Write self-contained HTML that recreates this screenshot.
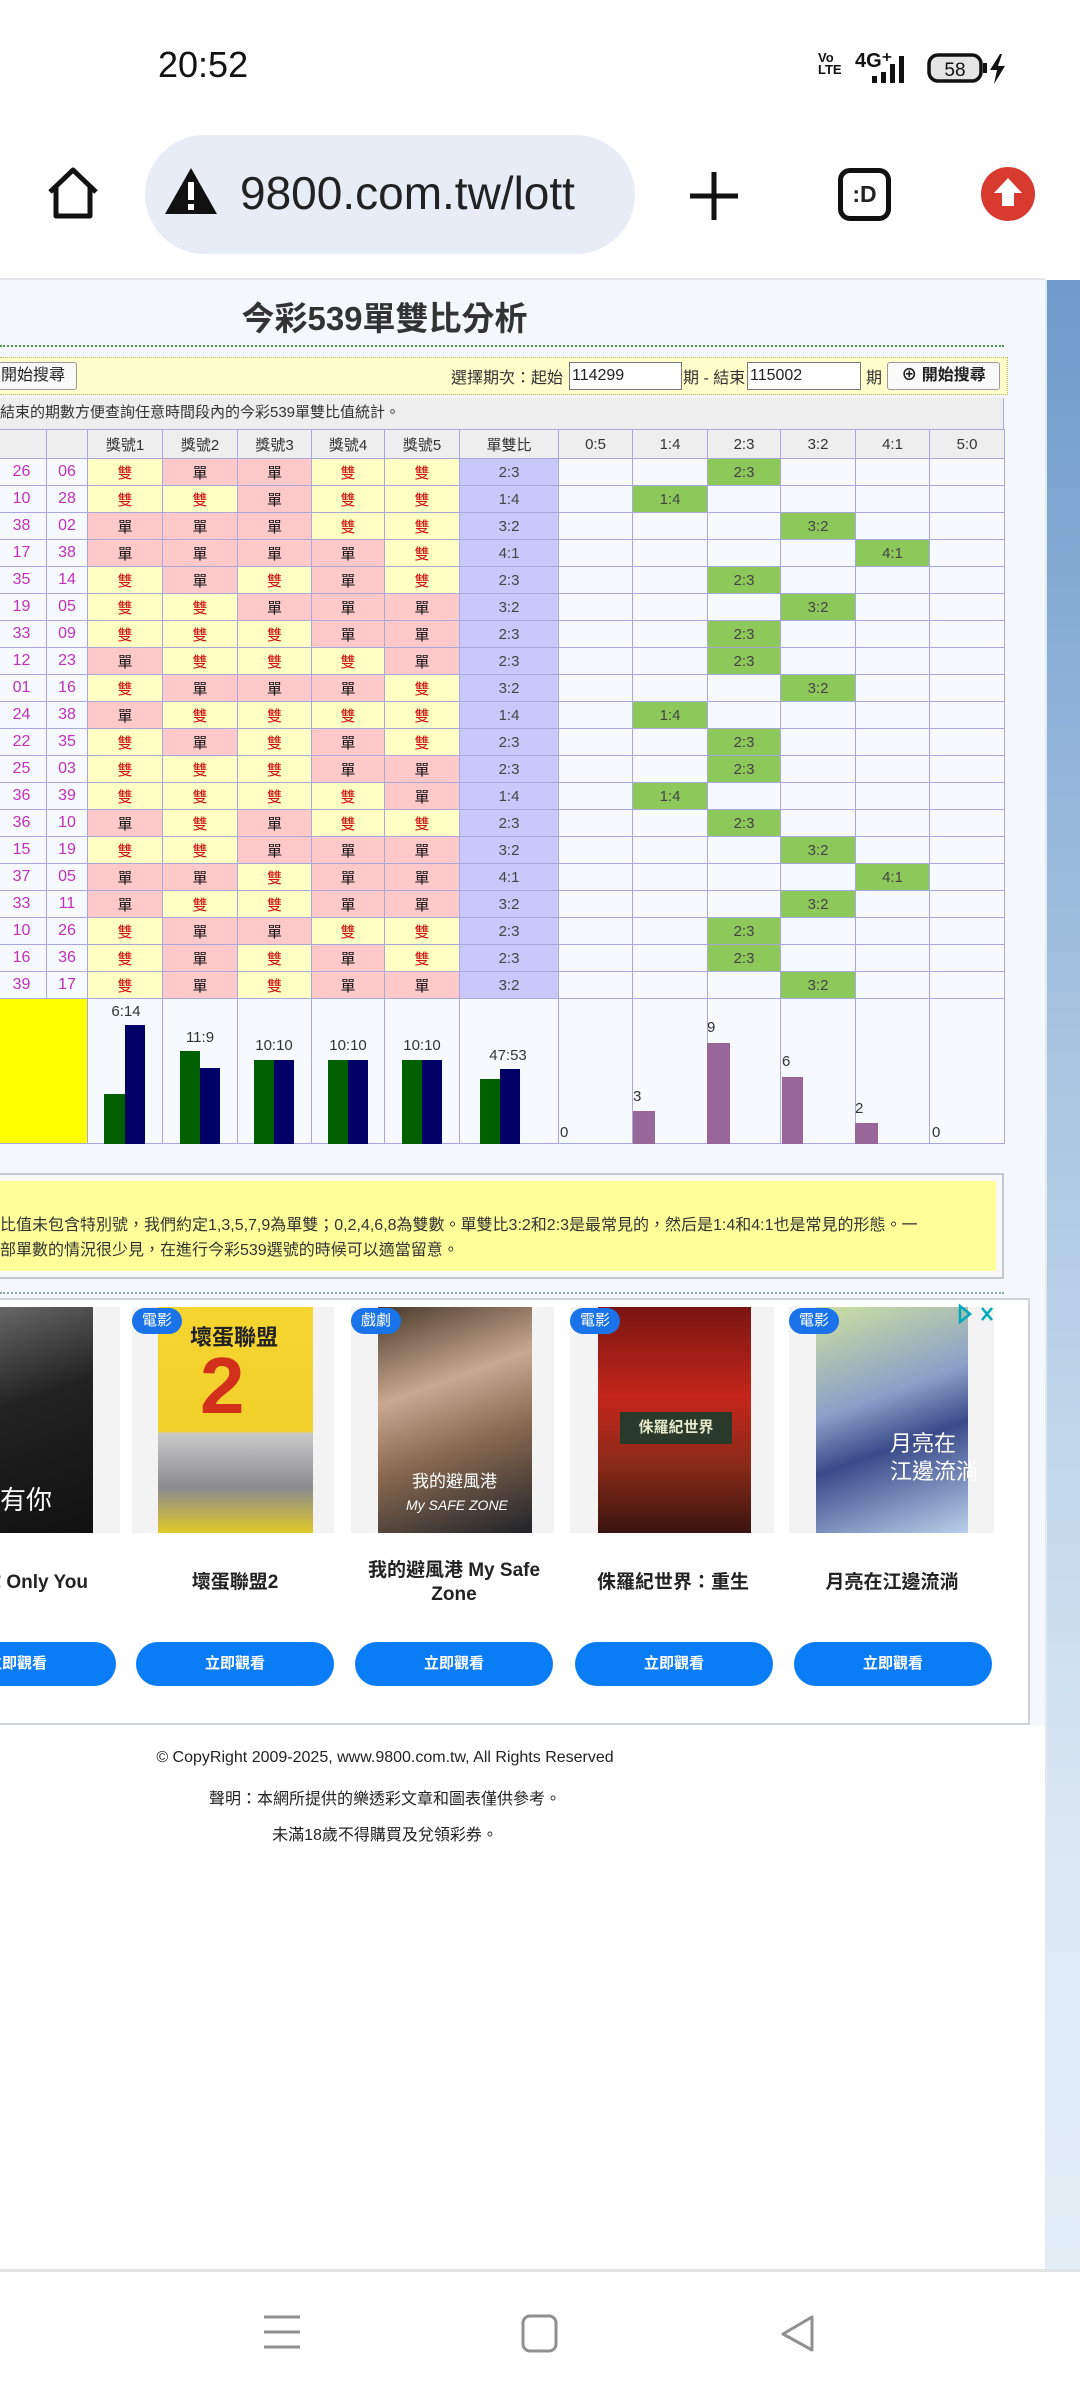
<!DOCTYPE html>
<html><head><meta charset="utf-8">
<style>
*{margin:0;padding:0;box-sizing:border-box}
body{width:1080px;height:2400px;position:relative;overflow:hidden;background:#fff;font-family:"Liberation Sans","Noto Sans CJK TC",sans-serif;color:#222}
.a{position:absolute}
#content{position:absolute;left:0;top:280px;width:1045px;height:1989px;background:#fff}
#side{position:absolute;left:1045px;top:280px;width:35px;height:1989px;background:linear-gradient(#6f9acb,#a9c6e2 40%,#dce9f4 80%,#e3eef7);border-left:2px solid #e5e9ee}
table{border-collapse:collapse;table-layout:fixed;position:absolute;left:-4px;font-size:15px}
td{border:1px solid #a8a8dc;text-align:center;height:27px;padding:0;overflow:hidden;white-space:nowrap}
th{border:1px solid #a8a8dc;background:#eeeeee;font-weight:normal;height:29px;color:#333}
td.n{color:#c030b8;font-size:16px;background:#f6f9fd}
td.d{background:#ffffc4;color:#d01010}
td.s{background:#ffc9c9;color:#111}
td.r{background:#c8c8fa;color:#444}
td.e{background:#f6f9fd}
td.g{background:#8cc85a;color:#444}
.bar{position:absolute}
.gr{background:#006000}.nv{background:#000066}.pu{background:#996699}
.lb{position:absolute;font-size:15px;color:#333;transform:translateX(-50%)}
.card{position:absolute;top:1307px;height:226px;background:#f3f3f3}
.tag{position:absolute;top:1308px;width:50px;height:26px;background:#1a73e8;color:#fff;font-size:15px;border-radius:0 0 13px 0;text-align:center;line-height:26px;border-radius:13px}
.tt{position:absolute;width:200px;text-align:center;font-size:19px;font-weight:bold;color:#222;line-height:24px}
.btn{position:absolute;top:1642px;width:198px;height:44px;background:#0a7cf5;border-radius:22px;color:#fff;font-size:15px;font-weight:bold;text-align:center;line-height:44px}
</style></head><body>
<!-- status bar -->
<div class="a" style="left:158px;top:44px;font-size:36px;color:#111">20:52</div>
<div class="a" style="left:818px;top:52px;font-size:13px;font-weight:bold;line-height:12px;color:#111">Vo<br>LTE</div>
<div class="a" style="left:855px;top:48px;font-size:20px;font-weight:bold;color:#111">4G⁺</div>
<svg class="a" style="left:870px;top:52px" width="40" height="32"><rect x="2" y="24" width="5" height="7" fill="#111"/><rect x="11" y="20" width="5" height="11" fill="#111"/><rect x="20" y="12" width="5" height="19" fill="#111"/><rect x="29" y="4" width="5" height="27" fill="#111"/></svg>
<svg class="a" style="left:926px;top:52px" width="90" height="34"><rect x="3" y="3" width="52" height="26" rx="9" fill="#e4e4e4" stroke="#111" stroke-width="3.5"/><rect x="57" y="11" width="4" height="10" fill="#111"/><text x="29" y="24" font-size="19" text-anchor="middle" fill="#111" font-family="Liberation Sans">58</text><path d="M74 2 L64 18 L71 18 L68 32 L79 14 L72 14 L76 2 Z" fill="#111"/></svg>
<!-- url bar -->
<svg class="a" style="left:44px;top:164px" width="58" height="58"><path d="M6 28 L29 6 L52 28 M12 22 V52 H46 V22" fill="none" stroke="#111" stroke-width="5" stroke-linejoin="round"/></svg>
<div class="a" style="left:145px;top:135px;width:490px;height:119px;background:#e8ecf6;border-radius:60px"></div>
<svg class="a" style="left:163px;top:165px" width="56" height="52"><path d="M28 3 L54 49 H2 Z" fill="#111"/><rect x="25" y="17" width="6" height="18" fill="#fff"/><rect x="25" y="39" width="6" height="6" fill="#fff"/></svg>
<div class="a" style="left:240px;top:166px;font-size:46px;color:#222;width:375px;overflow:hidden;white-space:nowrap">9800.com.tw/lott</div>
<svg class="a" style="left:688px;top:170px" width="52" height="52"><path d="M26 2 V50 M2 26 H50" stroke="#111" stroke-width="5"/></svg>
<div class="a" style="left:838px;top:168px;width:53px;height:53px;border:5px solid #111;border-radius:12px;font-size:23px;font-weight:bold;text-align:center;line-height:43px">:D</div>
<svg class="a" style="left:980px;top:166px" width="56" height="56"><circle cx="28" cy="28" r="27" fill="#d93a2f"/><path d="M28 12 L42 27 H34 V40 H22 V27 H14 Z" fill="#fff"/></svg>

<div id="content"></div>
<div id="side"></div>
<div class="a" style="left:0;top:280px;width:1045px;height:1445px;background:#f4f8fd"></div>
<div class="a" style="left:0;top:278px;width:1045px;height:2px;background:#e3e6ea"></div>
<div class="a" style="left:0;top:292px;width:1045px;text-align:center;padding-right:276px;font-size:33px;font-weight:bold;color:#333;left:0">今彩539單雙比分析</div>
<div class="a" style="left:0;top:345px;width:1004px;border-top:2px dotted #4a9a4a"></div>
<!-- search row -->
<div class="a" style="left:0;top:357px;width:1008px;height:38px;background:#ffffcc;border:1px dotted #b8b860;border-left:none"></div>
<div class="a" style="left:-4px;top:362px;width:81px;height:28px;border:1px solid #999;background:#fafafa;border-radius:3px;font-size:16px;line-height:26px;padding-left:4px">開始搜尋</div>
<div class="a" style="left:451px;top:364px;font-size:16px;color:#333">選擇期次：起始</div>
<div class="a" style="left:569px;top:362px;width:113px;height:28px;border:1px solid #777;background:#fff;font-size:16px;line-height:26px;padding-left:2px">114299</div>
<div class="a" style="left:683px;top:364px;font-size:16px;color:#333">期 - 結束</div>
<div class="a" style="left:747px;top:362px;width:114px;height:28px;border:1px solid #777;background:#fff;font-size:16px;line-height:26px;padding-left:2px">115002</div>
<div class="a" style="left:866px;top:364px;font-size:16px;color:#333">期</div>
<div class="a" style="left:887px;top:362px;width:113px;height:28px;border:1px solid #999;background:#fafafa;border-radius:3px;font-size:16px;font-weight:bold;line-height:26px;text-align:center">⊕ 開始搜尋</div>
<div class="a" style="left:0;top:398px;width:1004px;height:31px;background:#eeeeee;border-right:1px solid #a8a8dc;font-size:15px;color:#333;line-height:30px;padding-left:0">結束的期數方便查詢任意時間段內的今彩539單雙比值統計。</div>

<table style="top:429px">
<colgroup><col style="width:50px"><col style="width:41px"><col style="width:75px"><col style="width:75px"><col style="width:74px"><col style="width:73px"><col style="width:75px"><col style="width:99px"><col style="width:74px"><col style="width:75px"><col style="width:73px"><col style="width:75px"><col style="width:74px"><col style="width:75px"></colgroup>
<tr><th></th><th></th><th>獎號1</th><th>獎號2</th><th>獎號3</th><th>獎號4</th><th>獎號5</th><th>單雙比</th><th>0:5</th><th>1:4</th><th>2:3</th><th>3:2</th><th>4:1</th><th>5:0</th></tr>
<tr><td class="n">26</td><td class="n">06</td><td class="d">雙</td><td class="s">單</td><td class="s">單</td><td class="d">雙</td><td class="d">雙</td><td class="r">2:3</td><td class="e"></td><td class="e"></td><td class="g">2:3</td><td class="e"></td><td class="e"></td><td class="e"></td></tr>
<tr><td class="n">10</td><td class="n">28</td><td class="d">雙</td><td class="d">雙</td><td class="s">單</td><td class="d">雙</td><td class="d">雙</td><td class="r">1:4</td><td class="e"></td><td class="g">1:4</td><td class="e"></td><td class="e"></td><td class="e"></td><td class="e"></td></tr>
<tr><td class="n">38</td><td class="n">02</td><td class="s">單</td><td class="s">單</td><td class="s">單</td><td class="d">雙</td><td class="d">雙</td><td class="r">3:2</td><td class="e"></td><td class="e"></td><td class="e"></td><td class="g">3:2</td><td class="e"></td><td class="e"></td></tr>
<tr><td class="n">17</td><td class="n">38</td><td class="s">單</td><td class="s">單</td><td class="s">單</td><td class="s">單</td><td class="d">雙</td><td class="r">4:1</td><td class="e"></td><td class="e"></td><td class="e"></td><td class="e"></td><td class="g">4:1</td><td class="e"></td></tr>
<tr><td class="n">35</td><td class="n">14</td><td class="d">雙</td><td class="s">單</td><td class="d">雙</td><td class="s">單</td><td class="d">雙</td><td class="r">2:3</td><td class="e"></td><td class="e"></td><td class="g">2:3</td><td class="e"></td><td class="e"></td><td class="e"></td></tr>
<tr><td class="n">19</td><td class="n">05</td><td class="d">雙</td><td class="d">雙</td><td class="s">單</td><td class="s">單</td><td class="s">單</td><td class="r">3:2</td><td class="e"></td><td class="e"></td><td class="e"></td><td class="g">3:2</td><td class="e"></td><td class="e"></td></tr>
<tr><td class="n">33</td><td class="n">09</td><td class="d">雙</td><td class="d">雙</td><td class="d">雙</td><td class="s">單</td><td class="s">單</td><td class="r">2:3</td><td class="e"></td><td class="e"></td><td class="g">2:3</td><td class="e"></td><td class="e"></td><td class="e"></td></tr>
<tr><td class="n">12</td><td class="n">23</td><td class="s">單</td><td class="d">雙</td><td class="d">雙</td><td class="d">雙</td><td class="s">單</td><td class="r">2:3</td><td class="e"></td><td class="e"></td><td class="g">2:3</td><td class="e"></td><td class="e"></td><td class="e"></td></tr>
<tr><td class="n">01</td><td class="n">16</td><td class="d">雙</td><td class="s">單</td><td class="s">單</td><td class="s">單</td><td class="d">雙</td><td class="r">3:2</td><td class="e"></td><td class="e"></td><td class="e"></td><td class="g">3:2</td><td class="e"></td><td class="e"></td></tr>
<tr><td class="n">24</td><td class="n">38</td><td class="s">單</td><td class="d">雙</td><td class="d">雙</td><td class="d">雙</td><td class="d">雙</td><td class="r">1:4</td><td class="e"></td><td class="g">1:4</td><td class="e"></td><td class="e"></td><td class="e"></td><td class="e"></td></tr>
<tr><td class="n">22</td><td class="n">35</td><td class="d">雙</td><td class="s">單</td><td class="d">雙</td><td class="s">單</td><td class="d">雙</td><td class="r">2:3</td><td class="e"></td><td class="e"></td><td class="g">2:3</td><td class="e"></td><td class="e"></td><td class="e"></td></tr>
<tr><td class="n">25</td><td class="n">03</td><td class="d">雙</td><td class="d">雙</td><td class="d">雙</td><td class="s">單</td><td class="s">單</td><td class="r">2:3</td><td class="e"></td><td class="e"></td><td class="g">2:3</td><td class="e"></td><td class="e"></td><td class="e"></td></tr>
<tr><td class="n">36</td><td class="n">39</td><td class="d">雙</td><td class="d">雙</td><td class="d">雙</td><td class="d">雙</td><td class="s">單</td><td class="r">1:4</td><td class="e"></td><td class="g">1:4</td><td class="e"></td><td class="e"></td><td class="e"></td><td class="e"></td></tr>
<tr><td class="n">36</td><td class="n">10</td><td class="s">單</td><td class="d">雙</td><td class="s">單</td><td class="d">雙</td><td class="d">雙</td><td class="r">2:3</td><td class="e"></td><td class="e"></td><td class="g">2:3</td><td class="e"></td><td class="e"></td><td class="e"></td></tr>
<tr><td class="n">15</td><td class="n">19</td><td class="d">雙</td><td class="d">雙</td><td class="s">單</td><td class="s">單</td><td class="s">單</td><td class="r">3:2</td><td class="e"></td><td class="e"></td><td class="e"></td><td class="g">3:2</td><td class="e"></td><td class="e"></td></tr>
<tr><td class="n">37</td><td class="n">05</td><td class="s">單</td><td class="s">單</td><td class="d">雙</td><td class="s">單</td><td class="s">單</td><td class="r">4:1</td><td class="e"></td><td class="e"></td><td class="e"></td><td class="e"></td><td class="g">4:1</td><td class="e"></td></tr>
<tr><td class="n">33</td><td class="n">11</td><td class="s">單</td><td class="d">雙</td><td class="d">雙</td><td class="s">單</td><td class="s">單</td><td class="r">3:2</td><td class="e"></td><td class="e"></td><td class="e"></td><td class="g">3:2</td><td class="e"></td><td class="e"></td></tr>
<tr><td class="n">10</td><td class="n">26</td><td class="d">雙</td><td class="s">單</td><td class="s">單</td><td class="d">雙</td><td class="d">雙</td><td class="r">2:3</td><td class="e"></td><td class="e"></td><td class="g">2:3</td><td class="e"></td><td class="e"></td><td class="e"></td></tr>
<tr><td class="n">16</td><td class="n">36</td><td class="d">雙</td><td class="s">單</td><td class="d">雙</td><td class="s">單</td><td class="d">雙</td><td class="r">2:3</td><td class="e"></td><td class="e"></td><td class="g">2:3</td><td class="e"></td><td class="e"></td><td class="e"></td></tr>
<tr><td class="n">39</td><td class="n">17</td><td class="d">雙</td><td class="s">單</td><td class="d">雙</td><td class="s">單</td><td class="s">單</td><td class="r">3:2</td><td class="e"></td><td class="e"></td><td class="e"></td><td class="g">3:2</td><td class="e"></td><td class="e"></td></tr>
<tr><td colspan="2" style="height:145px;background:#ffff00"></td><td class="e" style="height:145px"></td><td class="e"></td><td class="e"></td><td class="e"></td><td class="e"></td><td class="e"></td><td class="e"></td><td class="e"></td><td class="e"></td><td class="e"></td><td class="e"></td><td class="e"></td></tr>
</table>
<!-- chart bars -->
<div class="bar gr" style="left:104px;top:1094px;width:21px;height:50px"></div><div class="bar nv" style="left:125px;top:1025px;width:20px;height:119px"></div><div class="lb" style="left:126px;top:1003px">6:14</div>
<div class="bar gr" style="left:180px;top:1051px;width:20px;height:93px"></div><div class="bar nv" style="left:200px;top:1068px;width:20px;height:76px"></div><div class="lb" style="left:200px;top:1029px">11:9</div>
<div class="bar gr" style="left:254px;top:1060px;width:20px;height:84px"></div><div class="bar nv" style="left:274px;top:1060px;width:20px;height:84px"></div><div class="lb" style="left:274px;top:1037px">10:10</div>
<div class="bar gr" style="left:328px;top:1060px;width:20px;height:84px"></div><div class="bar nv" style="left:348px;top:1060px;width:20px;height:84px"></div><div class="lb" style="left:348px;top:1037px">10:10</div>
<div class="bar gr" style="left:402px;top:1060px;width:20px;height:84px"></div><div class="bar nv" style="left:422px;top:1060px;width:20px;height:84px"></div><div class="lb" style="left:422px;top:1037px">10:10</div>
<div class="bar gr" style="left:480px;top:1079px;width:20px;height:65px"></div><div class="bar nv" style="left:500px;top:1069px;width:20px;height:75px"></div><div class="lb" style="left:508px;top:1047px">47:53</div>
<div class="bar pu" style="left:633px;top:1111px;width:22px;height:33px"></div><div class="a" style="left:633px;top:1088px;font-size:15px;color:#333">3</div>
<div class="bar pu" style="left:707px;top:1043px;width:23px;height:101px"></div><div class="a" style="left:707px;top:1019px;font-size:15px;color:#333">9</div>
<div class="bar pu" style="left:782px;top:1077px;width:21px;height:67px"></div><div class="a" style="left:782px;top:1053px;font-size:15px;color:#333">6</div>
<div class="bar pu" style="left:855px;top:1123px;width:23px;height:21px"></div><div class="a" style="left:855px;top:1100px;font-size:15px;color:#333">2</div>
<div class="a" style="left:560px;top:1124px;font-size:15px;color:#333">0</div>
<div class="a" style="left:932px;top:1124px;font-size:15px;color:#333">0</div>

<!-- note -->
<div class="a" style="left:0;top:1173px;width:1004px;height:106px;border:2px solid #c4c8d0;border-left:none;background:#f8f8f8"></div>
<div class="a" style="left:0;top:1181px;width:996px;height:90px;background:#ffff99;font-size:16px;color:#333;line-height:25px;padding-top:32px">比值未包含特別號，我們約定1,3,5,7,9為單雙；0,2,4,6,8為雙數。單雙比3:2和2:3是最常見的，然后是1:4和4:1也是常見的形態。一<br>部單數的情況很少見，在進行今彩539選號的時候可以適當留意。</div>
<div class="a" style="left:0;top:1292px;width:1004px;border-top:2px dotted #8ab"></div>

<!-- ads -->
<div class="a" style="left:0;top:1298px;width:1030px;height:427px;background:#fff;border:2px solid #d0d4da;border-left:none"></div>
<div class="card" style="left:0;width:120px"></div>
<div class="a" style="left:0;top:1307px;width:93px;height:226px;background:linear-gradient(160deg,#666,#222 40%,#111)"></div>
<div class="a" style="left:0;top:1480px;font-size:26px;color:#fff">有你</div>
<div class="card" style="left:132px;width:202px"></div>
<div class="a" style="left:158px;top:1307px;width:155px;height:226px;background:linear-gradient(#f6d531,#f2d02c 55%,#c9c9c9 56%,#8b8b90 80%,#e2c92a)"></div>
<div class="a" style="left:190px;top:1320px;font-size:22px;font-weight:bold;color:#222">壞蛋聯盟</div>
<div class="a" style="left:200px;top:1340px;font-size:80px;font-weight:bold;color:#d3301c">2</div>
<div class="card" style="left:351px;width:203px"></div>
<div class="a" style="left:378px;top:1307px;width:154px;height:226px;background:linear-gradient(160deg,#4a3a2a,#c8a890 35%,#8a6a50 60%,#20242a)"></div>
<div class="a" style="left:412px;top:1467px;font-size:17px;color:#fff">我的避風港</div>
<div class="a" style="left:406px;top:1497px;font-size:14px;color:#fff;font-style:italic">My SAFE ZONE</div>
<div class="card" style="left:570px;width:204px"></div>
<div class="a" style="left:598px;top:1307px;width:153px;height:226px;background:linear-gradient(#7a1512,#c4261a 40%,#8a2a18 70%,#3a1410)"></div>
<div class="a" style="left:620px;top:1412px;width:112px;height:32px;background:#2a3a2a;color:#e6e6c8;font-size:15px;font-weight:bold;text-align:center;line-height:32px">侏羅紀世界</div>
<div class="card" style="left:789px;width:205px"></div>
<div class="a" style="left:816px;top:1307px;width:152px;height:226px;background:linear-gradient(160deg,#cde0a0,#8aa0c8 40%,#3a4a8a 60%,#b8d0ea)"></div>
<div class="a" style="left:890px;top:1430px;font-size:22px;color:#fff;line-height:28px">月亮在<br>江邊流淌</div>
<div class="tag" style="left:132px">電影</div>
<div class="tag" style="left:351px">戲劇</div>
<div class="tag" style="left:570px">電影</div>
<div class="tag" style="left:789px">電影</div>
<svg class="a" style="left:956px;top:1303px" width="46" height="22"><path d="M4 3 L14 11 L4 19 Z" fill="none" stroke="#0ab" stroke-width="2.5"/><path d="M26 5 L36 17 M36 5 L26 17" stroke="#0ab" stroke-width="2.5"/></svg>
<div class="tt" style="left:-112px;top:1571px;text-align:right">你 Only You</div>
<div class="tt" style="left:135px;top:1571px">壞蛋聯盟2</div>
<div class="tt" style="left:354px;top:1559px">我的避風港 My Safe Zone</div>
<div class="tt" style="left:573px;top:1571px">侏羅紀世界：重生</div>
<div class="tt" style="left:792px;top:1571px">月亮在江邊流淌</div>
<div class="btn" style="left:-82px">立即觀看</div>
<div class="btn" style="left:136px">立即觀看</div>
<div class="btn" style="left:355px">立即觀看</div>
<div class="btn" style="left:575px">立即觀看</div>
<div class="btn" style="left:794px">立即觀看</div>

<!-- footer -->
<div class="a" style="left:0;top:1749px;width:770px;text-align:center;font-size:16px;color:#222">© CopyRight 2009-2025, www.9800.com.tw, All Rights Reserved</div>
<div class="a" style="left:0;top:1785px;width:770px;text-align:center;font-size:16px;color:#222">聲明：本網所提供的樂透彩文章和圖表僅供參考。</div>
<div class="a" style="left:0;top:1821px;width:770px;text-align:center;font-size:16px;color:#222">未滿18歲不得購買及兌領彩券。</div>

<!-- nav bar -->
<div class="a" style="left:0;top:2269px;width:1080px;height:131px;background:#fff;border-top:3px solid #e2e2e2"></div>
<svg class="a" style="left:262px;top:2312px" width="40" height="40"><path d="M2 5 H38 M2 20 H38 M2 35 H38" stroke="#909090" stroke-width="3"/></svg>
<svg class="a" style="left:520px;top:2314px" width="40" height="40"><rect x="3" y="2" width="33" height="35" rx="7" fill="none" stroke="#909090" stroke-width="3"/></svg>
<svg class="a" style="left:778px;top:2314px" width="40" height="40"><path d="M34 3 V36 L5 20 Z" fill="none" stroke="#909090" stroke-width="3" stroke-linejoin="round"/></svg>
</body></html>
